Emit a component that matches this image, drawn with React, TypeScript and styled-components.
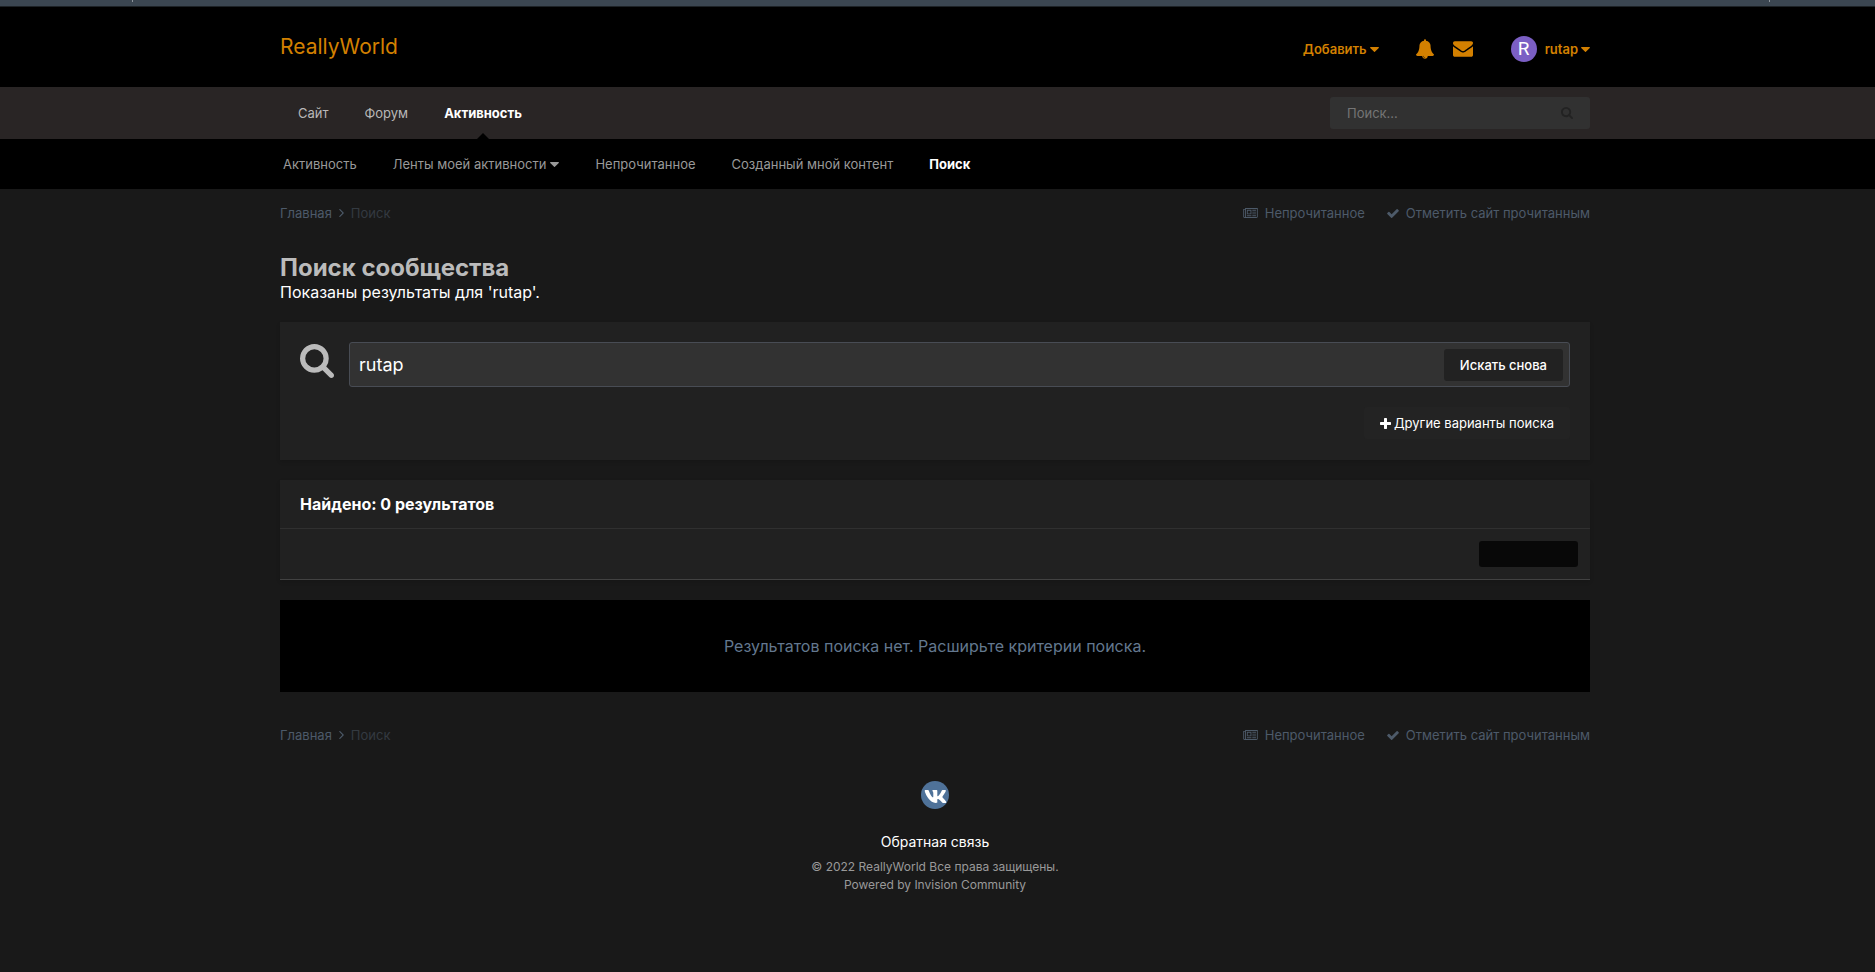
import React from "react";
import styled, { createGlobalStyle } from "styled-components";
import { FaVk } from "react-icons/fa";

const GlobalStyle = createGlobalStyle`
  *, *::before, *::after { box-sizing: border-box; }
  body {
    margin: 0;
    background: #191919;
    color: #fff;
    font-family: Inter, "Liberation Sans", sans-serif;
    font-size: 13px;
    line-height: 18px;
  }
  a { color: inherit; text-decoration: none; }
  h1, h2, p, ul, ol { margin: 0; padding: 0; }
  ul, ol { list-style: none; }
  button, input { font: inherit; color: inherit; border: 0; margin: 0; }
  button { cursor: pointer; }
  svg { display: block; flex: none; fill: currentColor; }
`;

const shapes = {
  search: {
    box: "64 128 1664 1664",
    d: "M1216 832q0-185-131.5-316.5t-316.5-131.5-316.5 131.5-131.5 316.5 131.5 316.5 316.5 131.5 316.5-131.5 131.5-316.5zm512 832q0 52-38 90t-90 38q-54 0-90-38l-343-342q-179 124-399 124-143 0-273.5-55.5t-225-150-150-225-55.5-273.5 55.5-273.5 150-225 225-150 273.5-55.5 273.5 55.5 225 150 150 225 55.5 273.5q0 220-124 399l343 343q37 37 37 90z",
  },
  check: {
    box: "121 334 1550 1188",
    d: "M1671 566q0 40-28 68l-724 724-136 136q-28 28-68 28t-68-28l-136-136-362-362q-28-28-28-68t28-68l136-136q28-28 68-28t68 28l294 295 656-657q28-28 68-28t68 28l136 136q28 28 28 68z",
  },
  plus: {
    box: "192 128 1408 1408",
    d: "M1600 736v192q0 40-28 68t-68 28h-416v416q0 40-28 68t-68 28h-192q-40 0-68-28t-28-68v-416h-416q-40 0-68-28t-28-68v-192q0-40 28-68t68-28h416v-416q0-40 28-68t68-28h192q40 0 68 28t28 68v416h416q40 0 68 28t28 68z",
  },
  envelope: {
    box: "0 256 1792 1408",
    d: "M1792 710v794q0 66-47 113t-113 47h-1472q-66 0-113-47t-47-113v-794q44 49 101 87 362 246 497 345 57 42 92.5 65.5t94.5 48 110 24.5h2q51 0 110-24.5t94.5-48 92.5-65.5q170-123 498-345 57-39 100-87zm0-294q0 79-49 151t-122 123q-376 261-468 325-10 7-42.5 31t-54 38.5-52 32.5-57.5 27-50 9h-2q-23 0-50-9t-57.5-27-52-32.5-54-38.5-42.5-31q-91-64-262-182.5t-205-142.5q-62-42-117-115.5t-55-136.5q0-78 41.5-130t118.5-52h1472q65 0 112.5 47t47.5 113z",
  },
  bell: {
    box: "64 0 1664 1792",
    d: "M912 1696q0-16-16-16-59 0-101.5-42.5t-42.5-101.5q0-16-16-16t-16 16q0 73 51.5 124.5t124.5 51.5q16 0 16-16zm816-288q0 52-38 90t-90 38h-448q0 106-75 181t-181 75-181-75-75-181h-448q-52 0-90-38t-38-90q50-42 91-88t85-119.5 74.5-158.5 50-206 19.5-260q0-152 117-282.5t307-158.5q-8-19-8-39 0-40 28-68t68-28 68 28 28 68q0 20-8 39 190 28 307 158.5t117 282.5q0 139 19.5 260t50 206 74.5 158.5 85 119.5 91 88z",
  },
  caret: {
    box: "384 640 1024 576",
    d: "M1408 704q0 26-19 45l-448 448q-19 19-45 19t-45-19l-448-448q-19-19-19-45t19-45 45-19h896q26 0 45 19t19 45z",
  },
  newspaper: {
    box: "0 128 2048 1408",
    d: "M1024 512h-384v384h384v-384zm128 640v128h-640v-128h640zm0-768v640h-640v-640h640zm640 768v128h-512v-128h512zm0-256v128h-512v-128h512zm0-256v128h-512v-128h512zm0-256v128h-512v-128h512zm-1536 960v-960h-128v960q0 26 19 45t45 19 45-19 19-45zm1664 0v-1088h-1536v1088q0 33-11 64h1483q26 0 45-19t19-45zm128-1216v1216q0 80-56 136t-136 56h-1664q-80 0-136-56t-56-136v-1088h256v-128h1792z",
  },
  angle: {
    box: "589 461 582 998",
    d: "M1171 960q0 13-10 23l-466 466q-10 10-23 10t-23-10l-50-50q-10-10-10-23t10-23l393-393-393-393q-10-10-10-23t10-23l50-50q10-10 23-10t23 10l466 466q10 10 10 23z",
  },
};

function Icon({ name, width, height }: { name: keyof typeof shapes; width: number; height: number }) {
  const { box, d } = shapes[name];
  return (
    <svg viewBox={box} width={width} height={height} aria-hidden="true">
      <path d={d} fillRule="evenodd" />
    </svg>
  );
}

const Caret = () => <Icon name="caret" width={9} height={5} />;

const WindowEdge = styled.div`
  display: flex;
  justify-content: space-between;
  height: 7px;
  padding: 0 105px 0 132px;
  background: #3b4651;
  border-bottom: 1px solid #1d2226;
`;

const Tick = styled.span`
  width: 1px;
  height: 2px;
  background: #8d959c;
`;

const Band = styled.div<{ $bg?: string }>`
  padding-right: 5px;
  background: ${(p) => p.$bg ?? "transparent"};
`;

const Container = styled.div`
  max-width: 1340px;
  margin: 0 auto;
  padding: 0 15px;
`;

const HeaderRow = styled(Container)`
  display: flex;
  align-items: center;
  justify-content: space-between;
  height: 80px;
  color: #d38000;
`;

const Logo = styled.a`
  font-size: 21px;
  line-height: 28px;
`;

const UserNav = styled.nav`
  display: flex;
  align-items: center;
  padding-top: 4px;
  font-weight: 600;
`;

const UserButton = styled.button`
  display: flex;
  align-items: center;
  gap: 3px;
  padding: 0;
  background: none;
`;

const IconGroup = styled.div`
  display: flex;
  align-items: center;
  gap: 19px;
  margin: 0 38px 0 37px;
`;

const Avatar = styled.span`
  display: flex;
  align-items: center;
  justify-content: center;
  width: 26px;
  height: 26px;
  margin-right: 5px;
  border-radius: 50%;
  background: #7b5fc4;
  color: #fff;
  font-family: Roboto, Inter, sans-serif;
  font-size: 19px;
  font-weight: 400;
`;

const NavRow = styled(Container)`
  display: flex;
  align-items: center;
  justify-content: space-between;
  height: 52px;
`;

const NavList = styled.ul`
  display: flex;
  align-self: stretch;
  padding-left: 18px;
  gap: 36px;
`;

const NavItem = styled.li<{ $active?: boolean }>`
  position: relative;
  display: flex;
  align-items: center;
  color: ${(p) => (p.$active ? "#fff" : "#b9b8b8")};
  font-weight: ${(p) => (p.$active ? 700 : 400)};

  ${(p) =>
    p.$active &&
    `&::after {
      content: "";
      position: absolute;
      left: 50%;
      bottom: 0;
      margin-left: -6px;
      border: 6px solid transparent;
      border-top-width: 0;
      border-bottom-color: #000;
    }`}
`;

const QuickSearch = styled.form`
  display: flex;
  align-items: center;
  width: 260px;
  height: 32px;
  padding: 0 17px;
  border-radius: 3px;
  background: #313131;

  input {
    flex: 1;
    min-width: 0;
    padding: 0;
    background: none;
    outline: none;
  }
  input::placeholder { color: #757575; opacity: 1; }
  button {
    padding: 0;
    background: none;
    color: #222;
  }
`;

const SubNav = styled(Container)`
  display: flex;
  align-items: center;
  gap: 36px;
  height: 50px;
  padding-left: 18px;
`;

const SubLink = styled.a<{ $active?: boolean }>`
  display: flex;
  align-items: center;
  gap: 4px;
  color: ${(p) => (p.$active ? "#fff" : "#999")};
  font-weight: ${(p) => (p.$active ? 700 : 400)};
`;

const CrumbBar = styled.nav`
  display: flex;
  align-items: center;
  justify-content: space-between;
  height: 18px;
  color: #4d5a69;
`;

const Crumbs = styled.ol`
  display: flex;
  align-items: center;
  gap: 7px;

  li {
    display: flex;
    align-items: center;
    gap: 7px;
  }
  li:last-child { color: #343a41; }
`;

const CrumbActions = styled.ul`
  display: flex;
  gap: 22px;

  a {
    display: flex;
    align-items: center;
    gap: 7px;
  }
`;

const Main = styled.main`
  padding: 32px 0 34px;
`;

const Title = styled.h1`
  color: #bbb;
  font-size: 24px;
  line-height: 28px;
  font-weight: 700;
`;

const Subtitle = styled.p`
  margin-bottom: 20px;
  font-size: 16px;
  line-height: 20px;
`;

const Panel = styled.section`
  margin-bottom: 20px;
  background: #212121;
  box-shadow: 0 2px 4px rgba(0, 0, 0, 0.12);
`;

const SearchPanel = styled(Panel)`
  display: flex;
  gap: 15px;
  padding: 20px 20px 21px;
`;

const SearchMark = styled.label`
  padding-top: 2px;
  color: #bbb;
`;

const SearchFields = styled.div`
  display: flex;
  flex: 1;
  flex-direction: column;
  align-items: flex-end;
  gap: 20px;
`;

const SearchBox = styled.div`
  display: flex;
  align-items: center;
  align-self: stretch;
  height: 45px;
  padding: 0 6px 0 9px;
  border: 1px solid #484c54;
  border-radius: 3px;
  background: #323232;

  input {
    flex: 1;
    min-width: 0;
    padding: 0;
    background: none;
    outline: none;
    font-size: 18px;
    line-height: 24px;
  }
`;

const Button = styled.button<{ $subtle?: boolean }>`
  display: flex;
  align-items: center;
  justify-content: center;
  gap: 3px;
  height: 32px;
  padding: 0 16px;
  border-radius: 3px;
  background: ${(p) => (p.$subtle ? "#232323" : "#222")};
  font-weight: ${(p) => (p.$subtle ? 400 : 500)};
  color: #fff;
`;

const ResultsTitle = styled.h2`
  padding: 14px 20px;
  border-bottom: 1px solid #303030;
  font-size: 16px;
  line-height: 20px;
  font-weight: 700;
`;

const FilterBar = styled.div`
  display: flex;
  justify-content: flex-end;
  padding: 12px;
  border-bottom: 1px solid #424242;
`;

const SortButton = styled.button`
  width: 99px;
  height: 26px;
  border-radius: 3px;
  background: #080808;
`;

const Empty = styled.p`
  padding: 36px 20px;
  background: #000;
  color: #63788f;
  font-size: 16px;
  line-height: 20px;
  text-align: center;
`;

const Footer = styled.footer`
  display: flex;
  flex-direction: column;
  align-items: center;
  padding: 37px 0 72px;
  color: #999;
  font-size: 12px;
`;

const VkLink = styled.a`
  display: flex;
  align-items: center;
  justify-content: center;
  width: 28px;
  height: 28px;
  padding-top: 3px;
  margin-bottom: 24px;
  border-radius: 50%;
  background: #4f7299;
  color: #fff;
`;

const Contact = styled.a`
  margin-bottom: 7px;
  color: #fff;
  font-size: 14px;
`;

const PageNav = () => (
  <CrumbBar>
    <Crumbs>
      <li>
        <a href="#home">Главная</a>
        <Icon name="angle" width={5} height={8} />
      </li>
      <li>Поиск</li>
    </Crumbs>
    <CrumbActions>
      <li>
        <a href="#unread">
          <Icon name="newspaper" width={15} height={10} />
          Непрочитанное
        </a>
      </li>
      <li>
        <a href="#mark">
          <Icon name="check" width={12} height={9} />
          Отметить сайт прочитанным
        </a>
      </li>
    </CrumbActions>
  </CrumbBar>
);

const PageBody = styled(Container)`
  padding-top: 15px;
`;

export default function App() {
  const stop = (e: React.FormEvent) => e.preventDefault();
  return (
    <>
      <GlobalStyle />
      <WindowEdge>
        <Tick />
        <Tick />
      </WindowEdge>
      <header>
        <Band $bg="#000">
          <HeaderRow>
            <Logo href="#home">ReallyWorld</Logo>
            <UserNav>
              <UserButton type="button">
                Добавить
                <Caret />
              </UserButton>
              <IconGroup>
                <UserButton type="button" aria-label="Уведомления">
                  <Icon name="bell" width={18} height={20} />
                </UserButton>
                <UserButton type="button" aria-label="Сообщения">
                  <Icon name="envelope" width={20} height={16} />
                </UserButton>
              </IconGroup>
              <UserButton type="button">
                <Avatar>R</Avatar>
                rutap
                <Caret />
              </UserButton>
            </UserNav>
          </HeaderRow>
        </Band>
        <Band $bg="#292525">
          <NavRow>
            <NavList>
              <NavItem><a href="#site">Сайт</a></NavItem>
              <NavItem><a href="#forum">Форум</a></NavItem>
              <NavItem $active><a href="#activity">Активность</a></NavItem>
            </NavList>
            <QuickSearch onSubmit={stop}>
              <input type="search" placeholder="Поиск..." aria-label="Поиск" />
              <button type="submit" aria-label="Найти">
                <Icon name="search" width={12} height={12} />
              </button>
            </QuickSearch>
          </NavRow>
        </Band>
        <Band $bg="#000">
          <SubNav as="nav">
            <SubLink href="#all">Активность</SubLink>
            <SubLink href="#feeds">
              Ленты моей активности
              <Caret />
            </SubLink>
            <SubLink href="#unread">Непрочитанное</SubLink>
            <SubLink href="#mine">Созданный мной контент</SubLink>
            <SubLink href="#search" $active>Поиск</SubLink>
          </SubNav>
        </Band>
      </header>
      <Band>
        <PageBody>
          <PageNav />
          <Main>
            <Title>Поиск сообщества</Title>
            <Subtitle>Показаны результаты для 'rutap'.</Subtitle>
            <SearchPanel as="form" onSubmit={stop}>
              <SearchMark htmlFor="query" aria-label="Запрос">
                <Icon name="search" width={34} height={34} />
              </SearchMark>
              <SearchFields>
                <SearchBox>
                  <input id="query" type="text" defaultValue="rutap" />
                  <Button type="submit">Искать снова</Button>
                </SearchBox>
                <Button type="button" $subtle>
                  <Icon name="plus" width={11} height={11} />
                  Другие варианты поиска
                </Button>
              </SearchFields>
            </SearchPanel>
            <Panel>
              <ResultsTitle>Найдено: 0 результатов</ResultsTitle>
              <FilterBar>
                <SortButton type="button" aria-label="Сортировка" />
              </FilterBar>
            </Panel>
            <Empty>Результатов поиска нет. Расширьте критерии поиска.</Empty>
          </Main>
          <PageNav />
          <Footer>
            <VkLink href="#vk" aria-label="VK">
              <FaVk size={23} />
            </VkLink>
            <Contact href="#contact">Обратная связь</Contact>
            <p>© 2022 ReallyWorld Все права защищены.</p>
            <a href="#powered">Powered by Invision Community</a>
          </Footer>
        </PageBody>
      </Band>
    </>
  );
}
